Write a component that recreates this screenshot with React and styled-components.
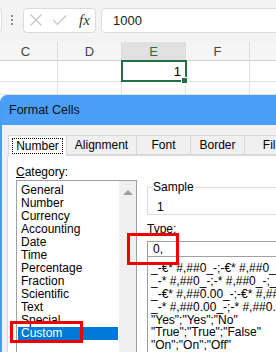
import React from 'react';
import styled, { createGlobalStyle } from 'styled-components';

const GlobalStyle = createGlobalStyle`
  html, body {
    margin: 0;
    padding: 0;
    background: #ffffff;
    overflow: hidden;
  }
  * { box-sizing: border-box; }
`;

const Page = styled.div`
  position: relative;
  width: 276px;
  height: 352px;
  overflow: hidden;
  background: #ffffff;
  font-family: "Liberation Sans", Arial, sans-serif;
  font-size: 12px;
  color: #000;
`;

// Barre de formule en haut
const FormulaBar = styled.div`
  height: 42px;
  background: #f3f3f3;
  display: flex;
  align-items: center;
  padding-bottom: 2px;
`;

const NameBoxEdge = styled.div`
  width: 3px;
  height: 24px;
  margin-left: -1px;
  background: #fff;
  border: 1px solid #dcdcdc;
  border-left: none;
  border-radius: 0 4px 4px 0;
`;

const Grip = styled.div`
  width: 2px;
  margin: 0 10px 0 9px;
  display: flex;
  flex-direction: column;
  gap: 2px;

  span {
    width: 2px;
    height: 2px;
    background: #8a8a8a;
  }
`;

const FuncBox = styled.div`
  width: 73px;
  height: 25px;
  background: #fff;
  border: 1px solid #dcdcdc;
  border-radius: 4px;
  display: flex;
  align-items: center;
  padding-left: 5px;
  gap: 9px;
`;

const Fx = styled.span`
  font-family: "Liberation Serif", "Times New Roman", serif;
  font-style: italic;
  font-size: 15px;
  color: #333;
  margin-left: 3px;
`;

const FormulaInput = styled.div`
  flex: 1;
  height: 25px;
  margin-left: 5px;
  margin-right: -10px;
  background: #fff;
  border: 1px solid #dcdcdc;
  border-radius: 4px;
  display: flex;
  align-items: center;
  padding-left: 11px;
  font-size: 13px;
  color: #222;
`;

// Grille du tableur
const GridRow = styled.div`
  display: grid;
  grid-template-columns: repeat(5, 64px);
  margin-left: -6px;
  height: ${p => p.$h}px;
  background: ${p => (p.$header ? '#f5f5f5' : '#fff')};
  border-bottom: 1px solid ${p => (p.$header ? '#d4d4d4' : '#e1e1e1')};
`;

const HeaderCell = styled.div`
  display: flex;
  align-items: center;
  justify-content: center;
  border-right: 1px solid #dcdcdc;
  background: ${p => (p.$active ? '#e1e1e1' : 'transparent')};
  color: ${p => (p.$active ? '#1e7145' : '#444')};
  font-size: 13px;
`;

const Cell = styled.div`
  position: relative;
  border-right: 1px solid #e1e1e1;
  display: flex;
  align-items: center;
  justify-content: flex-end;
  padding-right: 4px;
  font-size: 13px;
  ${p => p.$selected && `
    outline: 2px solid #1e7145;
    outline-offset: -1px;
    z-index: 1;
  `}
`;

const FillHandle = styled.span`
  position: absolute;
  right: -3px;
  bottom: -3px;
  width: 5px;
  height: 5px;
  background: #1e7145;
  border: 1px solid #fff;
  box-sizing: content-box;
`;

// Boîte de dialogue
const Dialog = styled.div`
  width: 320px;
  height: 300px;
  background: #f0f0f0;
  border-left: 2px solid #4a9cf0;
  border-top-left-radius: 7px;
  overflow: hidden;
`;

const TitleBar = styled.div`
  height: 30px;
  background: #4a9ef5;
  display: flex;
  align-items: center;
  padding-left: 7px;
  font-size: 12.5px;
  color: #111;
`;

const DialogBody = styled.div`
  padding: 10px 0 0 5px;
`;

const TabStrip = styled.div`
  display: flex;
  height: 20px;
  position: relative;
  z-index: 1;
`;

const Tab = styled.div`
  flex-shrink: 0;
  width: ${p => p.$w}px;
  height: ${p => (p.$active ? 21 : 20)}px;
  margin-left: ${p => (p.$first ? 1 : 0)}px;
  background: ${p => (p.$active ? '#fff' : '#f0f0f0')};
  border: 1px solid #d9d9d9;
  border-left: ${p => (p.$first ? '1px solid #d9d9d9' : 'none')};
  border-bottom: ${p => (p.$active ? 'none' : '1px solid #d9d9d9')};
  display: flex;
  align-items: center;
  justify-content: center;
  font-size: 12px;
  color: #000;
`;

const FocusRect = styled.span`
  border: 1px dotted #000;
  padding: 1px 3px;
  line-height: 12px;
`;

const Panel = styled.div`
  height: 200px;
  background: #fff;
  border-left: 1px solid #d9d9d9;
  border-top: 1px solid #d9d9d9;
  display: flex;
  padding: 9px 0 0 8px;
  gap: 10px;
`;

const CategoryCol = styled.div`
  width: 121px;
  flex-shrink: 0;
  display: flex;
  flex-direction: column;
`;

const Label = styled.div`
  line-height: 15px;
  height: 15px;
  color: #000;
`;

const ListBox = styled.div`
  border: 1px solid #a0a0a0;
  background: #fff;
  display: flex;
  height: 200px;
`;

const ListItems = styled.div`
  flex: 1;
  padding: 3px 1px 0 1px;
  overflow: hidden;
`;

const ListItem = styled.div`
  height: 13px;
  line-height: 13px;
  padding-left: 3px;
  white-space: nowrap;
  background: ${p => (p.$selected ? '#0078d7' : 'transparent')};
  color: ${p => (p.$selected ? '#fff' : '#000')};
`;

const ScrollTrack = styled.div`
  width: 17px;
  background: #f0f0f0;
  display: flex;
  justify-content: center;
  padding-top: 9px;
`;

const UpArrow = styled.div`
  width: 0;
  height: 0;
  border-left: 5px solid transparent;
  border-right: 5px solid transparent;
  border-bottom: 5px solid #a3a3a3;
`;

const RightCol = styled.div`
  flex: 1;
  min-width: 0;
  display: flex;
  flex-direction: column;
`;

const SampleGroup = styled.fieldset`
  margin: 15px 0 0 0;
  padding: 0 0 0 4px;
  height: 39px;
  border: 1px solid #dcdcdc;
  border-right: none;
  min-inline-size: 0;

  legend {
    padding: 0 1px;
    line-height: 14px;
  }
`;

const SampleValue = styled.div`
  padding-left: 5px;
  margin-top: 6px;
  line-height: 14px;
`;

const TypeLabel = styled(Label)`
  margin-top: 7px;
`;

const TypeInput = styled.div`
  margin-top: 4px;
  height: 20px;
  border: 1px solid #a0a0a0;
  border-right: none;
  background: #fff;
  padding-left: 5px;
  display: flex;
  align-items: center;
`;

const TypeList = styled.div`
  border: 1px solid #a0a0a0;
  border-top: none;
  border-right: none;
  height: 120px;
  padding: 5px 0 0 3px;
  overflow: hidden;
`;

const TypeItem = styled.div`
  height: 12.8px;
  line-height: 13px;
  white-space: nowrap;
`;

const RedBox = styled.div`
  position: absolute;
  border: 3px solid #ee0000;
  left: ${p => p.$x}px;
  top: ${p => p.$y}px;
  width: ${p => p.$w}px;
  height: ${p => p.$h}px;
`;

const categories = [
  'General', 'Number', 'Currency', 'Accounting', 'Date', 'Time',
  'Percentage', 'Fraction', 'Scientific', 'Text', 'Special', 'Custom',
];

const formats = [
  '_-€* #,##0_-;-€* #,##0_-;_-€* "-"_-;_-@_-',
  '_-* #,##0_-;-* #,##0_-;_-* "-"_-;_-@_-',
  '_-€* #,##0.00_-;-€* #,##0.00_-;_-€* "-"??_-;_-@_-',
  '_-* #,##0.00_-;-* #,##0.00_-;_-* "-"??_-;_-@_-',
  '"Yes";"Yes";"No"',
  '"True";"True";"False"',
  '"On";"On";"Off"',
];

const tabs = [
  { name: 'Number', w: 59 },
  { name: 'Alignment', w: 70 },
  { name: 'Font', w: 54 },
  { name: 'Border', w: 54 },
  { name: 'Fill', w: 52 },
];

function CrossIcon() {
  return (
    <svg width="14" height="14" viewBox="0 0 14 14">
      <path d="M1.5 1.5 L12.5 12.5 M12.5 1.5 L1.5 12.5" stroke="#c4c4c4" strokeWidth="1.2" fill="none" />
    </svg>
  );
}

function CheckIcon() {
  return (
    <svg width="15" height="12" viewBox="0 0 15 12">
      <path d="M1 6 L5.5 10.5 L14 1.5" stroke="#c4c4c4" strokeWidth="1.2" fill="none" />
    </svg>
  );
}

export default function App() {
  return (
    <Page>
      <GlobalStyle />
      <FormulaBar>
        <NameBoxEdge />
        <Grip><span /><span /><span /></Grip>
        <FuncBox>
          <CrossIcon />
          <CheckIcon />
          <Fx>fx</Fx>
        </FuncBox>
        <FormulaInput>1000</FormulaInput>
      </FormulaBar>

      <GridRow $header $h={19}>
        <HeaderCell>C</HeaderCell>
        <HeaderCell>D</HeaderCell>
        <HeaderCell $active>E</HeaderCell>
        <HeaderCell>F</HeaderCell>
        <HeaderCell />
      </GridRow>
      <GridRow $h={21}>
        <Cell />
        <Cell />
        <Cell $selected>1<FillHandle /></Cell>
        <Cell />
        <Cell />
      </GridRow>
      <GridRow $h={13}>
        <Cell />
        <Cell />
        <Cell />
        <Cell />
        <Cell />
      </GridRow>

      <Dialog>
        <TitleBar>Format Cells</TitleBar>
        <DialogBody>
          <TabStrip>
            {tabs.map((t, i) => (
              <Tab key={t.name} $w={t.w} $first={i === 0} $active={i === 0}>
                {i === 0 ? <FocusRect>{t.name}</FocusRect> : t.name}
              </Tab>
            ))}
          </TabStrip>
          <Panel>
            <CategoryCol>
              <Label><u>C</u>ategory:</Label>
              <ListBox>
                <ListItems>
                  {categories.map(c => (
                    <ListItem key={c} $selected={c === 'Custom'}>{c}</ListItem>
                  ))}
                </ListItems>
                <ScrollTrack><UpArrow /></ScrollTrack>
              </ListBox>
            </CategoryCol>
            <RightCol>
              <SampleGroup>
                <legend>Sample</legend>
                <SampleValue>1</SampleValue>
              </SampleGroup>
              <TypeLabel><u>T</u>ype:</TypeLabel>
              <TypeInput>0,</TypeInput>
              <TypeList>
                {formats.map(f => (
                  <TypeItem key={f}>{f}</TypeItem>
                ))}
              </TypeList>
            </RightCol>
          </Panel>
        </DialogBody>
      </Dialog>

      <RedBox $x={10} $y={321} $w={73} $h={22} />
      <RedBox $x={127} $y={233} $w={52} $h={32} />
    </Page>
  );
}
